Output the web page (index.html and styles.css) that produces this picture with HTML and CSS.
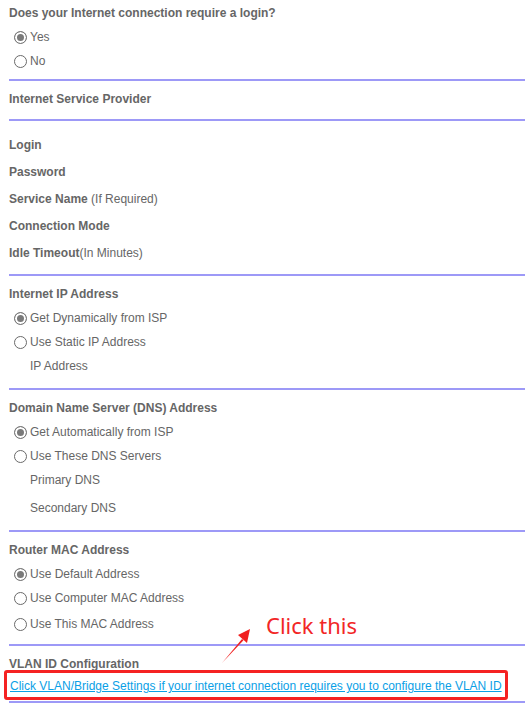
FILE: index.html
```html
<!DOCTYPE html>
<html>
<head>
<meta charset="utf-8">
<link rel="stylesheet" href="styles.css">
</head>
<body>
<div class="page">
  <section class="sec s1">
    <div class="row title">Does your Internet connection require a login?</div>
    <label class="row opt"><input type="radio" name="login" checked><span>Yes</span></label>
    <label class="row opt"><input type="radio" name="login"><span>No</span></label>
  </section>
  <section class="sec s2">
    <div class="row title">Internet Service Provider</div>
  </section>
  <section class="sec s3">
    <div class="frow title">Login</div>
    <div class="frow title">Password</div>
    <div class="frow title">Service Name <span class="norm">(If Required)</span></div>
    <div class="frow title">Connection Mode</div>
    <div class="frow title">Idle Timeout<span class="norm">(In Minutes)</span></div>
  </section>
  <section class="sec s4">
    <div class="row title">Internet IP Address</div>
    <label class="row opt"><input type="radio" name="ip" checked><span>Get Dynamically from ISP</span></label>
    <label class="row opt"><input type="radio" name="ip"><span>Use Static IP Address</span></label>
    <div class="row sub">IP Address</div>
  </section>
  <section class="sec s5">
    <div class="row title">Domain Name Server (DNS) Address</div>
    <label class="row opt"><input type="radio" name="dns" checked><span>Get Automatically from ISP</span></label>
    <label class="row opt"><input type="radio" name="dns"><span>Use These DNS Servers</span></label>
    <div class="row sub">Primary DNS</div>
    <div class="row sub gap4">Secondary DNS</div>
  </section>
  <section class="sec s6">
    <div class="row title">Router MAC Address</div>
    <label class="row opt"><input type="radio" name="mac" checked><span>Use Default Address</span></label>
    <label class="row opt"><input type="radio" name="mac"><span>Use Computer MAC Address</span></label>
    <label class="row opt gap2"><input type="radio" name="mac"><span>Use This MAC Address</span></label>
  </section>
  <section class="sec s7">
    <div class="row title">VLAN ID Configuration</div>
    <div class="linkrow"><a href="#" class="link">Click VLAN/Bridge Settings if your internet connection requires you to configure the VLAN ID</a></div>
  </section>
</div>

<div class="note">Click this</div>
<svg class="arrow" width="40" height="50" viewBox="0 0 40 50">
  <path d="M0 42 L20 18 L21.5 19.3 Z" fill="#f02020"/>
  <path d="M28 8 L16 14 L25 22 Z" fill="#f02020"/>
</svg>
<div class="box"></div>
</body>
</html>
```

FILE: styles.css
```css
html, body {
  margin: 0;
  padding: 0;
  background: #fff;
}
body {
  font-family: "Liberation Sans", Arial, sans-serif;
  font-size: 12px;
  color: #666;
  position: relative;
  width: 525px;
  height: 709px;
  overflow: hidden;
}
.page {
  padding-left: 9px;
}
.sec {
  border-bottom: 2px solid #9d99f7;
  padding-top: 6px;
}
.s1 { padding-top: 1px; padding-bottom: 6px; }
.s2 { padding-bottom: 8px; }
.s3 { padding-top: 11px; padding-bottom: 7px; }
.s4 { padding-bottom: 10px; }
.s5 { padding-bottom: 10px; }
.s6 { padding-bottom: 8px; }
.s7 { padding-bottom: 5px; }

.row {
  height: 24px;
  display: flex;
  align-items: center;
}
.frow {
  height: 27px;
  line-height: 27px;
}
.title { font-weight: bold; }
.norm { font-weight: normal; }
.sub { padding-left: 21px; }
.gap4 { margin-top: 4px; }
.gap2 { margin-top: 2px; }

.opt input {
  -webkit-appearance: none;
  appearance: none;
  width: 13px;
  height: 13px;
  margin: 0 3px 0 5px;
  border: 1px solid #6a6a6a;
  border-radius: 50%;
  background: #fff;
  box-sizing: border-box;
  flex: none;
}
.opt input:checked {
  border-color: #777;
  background: #7a7a7a;
  box-shadow: inset 0 0 0 2px #fff;
}
.linkrow {
  height: 20px;
  display: flex;
  align-items: center;
  padding-left: 1px;
}
.link {
  color: #0aa0e6;
  text-decoration: underline;
  font-size: 12px;
}

.note {
  position: absolute;
  left: 266px;
  top: 609px;
  font-family: "Noto Sans", "Liberation Sans", sans-serif;
  font-size: 22px;
  color: #f22626;
  line-height: 32px;
}
.arrow {
  position: absolute;
  left: 222px;
  top: 621px;
}
.box {
  position: absolute;
  left: 4px;
  top: 670px;
  width: 504px;
  height: 30px;
  box-sizing: border-box;
  border: 3px solid #f52222;
  border-radius: 3px;
}
```
